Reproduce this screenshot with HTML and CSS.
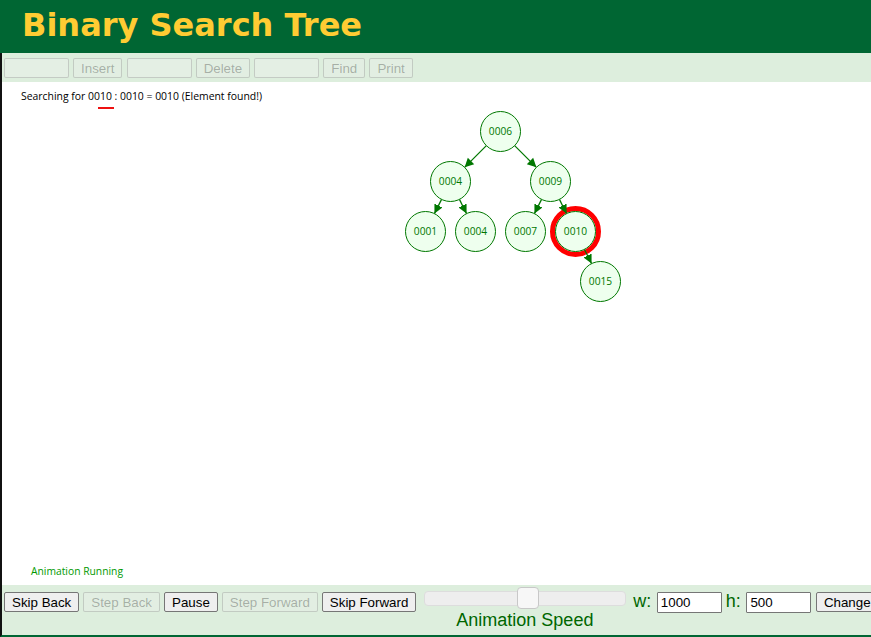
FILE: index.html
```html
<!DOCTYPE html>
<html>
<head>
<meta charset="utf-8">
<title>Binary Search Tree</title>
<link rel="stylesheet" href="styles.css">
</head>
<body>
<div class="header"><h1 class="title">Binary Search Tree</h1></div>
<div class="main">
  <div class="toolbar">
    <input class="field field-off" type="text" disabled>
    <button class="btn btn-off" disabled>Insert</button>
    <input class="field field-off" type="text" disabled>
    <button class="btn btn-off" disabled>Delete</button>
    <input class="field field-off" type="text" disabled>
    <button class="btn btn-off" disabled>Find</button>
    <button class="btn btn-off" disabled>Print</button>
  </div>
  <div class="canvas">
    <svg class="stage" width="869" height="503" viewBox="0 0 869 503" xmlns="http://www.w3.org/2000/svg">
      <defs>
        <marker id="arr" markerUnits="userSpaceOnUse" markerWidth="10" markerHeight="10" refX="9" refY="5" orient="auto">
          <path d="M0,0.5 L9,5 L0,9.5 z" fill="#007700"/>
        </marker>
      </defs>
      <g transform="translate(-2,-82)">
        <text class="msg" x="21" y="100" textLength="241" lengthAdjust="spacingAndGlyphs">Searching for 0010 : 0010 = 0010 (Element found!)</text>
        <rect x="98" y="107" width="16" height="2" fill="#ee1111"/>

        <circle cx="575.5" cy="231.5" r="23" fill="none" stroke="#ff0000" stroke-width="5"/>

        <g class="edges" stroke="#007700" stroke-width="1.2" marker-end="url(#arr)">
          <line x1="486.36" y1="145.64" x2="464.64" y2="167.36"/>
          <line x1="514.64" y1="145.64" x2="536.36" y2="167.36"/>
          <line x1="441.56" y1="199.39" x2="434.44" y2="213.61"/>
          <line x1="459.44" y1="199.39" x2="466.56" y2="213.61"/>
          <line x1="541.56" y1="199.39" x2="534.44" y2="213.61"/>
          <line x1="559.44" y1="199.39" x2="566.56" y2="213.61"/>
          <line x1="584.44" y1="249.39" x2="591.56" y2="263.61"/>
        </g>

        <g class="nodes">
          <circle cx="500.5" cy="131.5" r="20"/>
          <circle cx="450.5" cy="181.5" r="20"/>
          <circle cx="550.5" cy="181.5" r="20"/>
          <circle cx="425.5" cy="231.5" r="20"/>
          <circle cx="475.5" cy="231.5" r="20"/>
          <circle cx="525.5" cy="231.5" r="20"/>
          <circle cx="575.5" cy="231.5" r="20"/>
          <circle cx="600.5" cy="281.5" r="20"/>
        </g>
        <g class="labels">
          <text x="500.5" y="135.3">0006</text>
          <text x="450.5" y="185.3">0004</text>
          <text x="550.5" y="185.3">0009</text>
          <text x="425.5" y="235.3">0001</text>
          <text x="475.5" y="235.3">0004</text>
          <text x="525.5" y="235.3">0007</text>
          <text x="575.5" y="235.3">0010</text>
          <text x="600.5" y="285.3">0015</text>
        </g>

        <text class="status" x="31" y="575" textLength="92" lengthAdjust="spacingAndGlyphs">Animation Running</text>
      </g>
    </svg>
  </div>
  <div class="controls">
    <div class="anim-btns">
      <button class="btn">Skip Back</button>
      <button class="btn btn-off" disabled>Step Back</button>
      <button class="btn">Pause</button>
      <button class="btn btn-off" disabled>Step Forward</button>
      <button class="btn">Skip Forward</button>
    </div>
    <div class="speed">
      <div class="slider">
        <div class="track"></div>
        <div class="thumb"></div>
      </div>
      <div class="speed-label">Animation Speed</div>
    </div>
    <span class="dim-label">w:</span>
    <input class="field field-on" type="text" value="1000">
    <span class="dim-label dim-h">h:</span>
    <input class="field field-on" type="text" value="500">
    <button class="btn btn-change">Change</button>
  </div>
</div>
</body>
</html>
```
FILE: styles.css
```css
html, body {
  margin: 0;
  padding: 0;
  overflow: hidden;
  background: #ffffff;
}

body {
  width: 871px;
  height: 637px;
  font-family: "Liberation Sans", Arial, sans-serif;
}

.header {
  box-sizing: border-box;
  height: 53px;
  background: #006633;
  padding: 7px 0 0 22px;
}

.title {
  margin: 0;
  font-family: "DejaVu Sans", Verdana, sans-serif;
  font-weight: bold;
  font-size: 32px;
  line-height: 37px;
  color: #ffcc33;
  white-space: nowrap;
}

.main {
  border-left: 2px solid #111111;
  border-bottom: 2px solid #006633;
}

.toolbar {
  box-sizing: border-box;
  height: 29px;
  background: #ddeedd;
  display: flex;
  align-items: flex-start;
  gap: 4.1px;
  padding: 5px 0 0 2px;
}

.field {
  box-sizing: border-box;
  width: 65px;
  height: 20px;
  margin: 0;
  padding: 1px 3px;
  font-family: "Liberation Sans", Arial, sans-serif;
  font-size: 13.333px;
  border-radius: 2px;
  flex-shrink: 0;
}

.field-off {
  background: rgba(239, 239, 239, 0.4);
  border: 1px solid rgba(118, 118, 118, 0.3);
}

.field-on {
  height: 21px;
  background: #ffffff;
  border: 1px solid #767676;
  color: #000000;
  border-radius: 1px;
  padding: 1px 3px;
}

.btn {
  box-sizing: border-box;
  height: 20px;
  margin: 0;
  padding: 0 7px;
  font-family: "Liberation Sans", Arial, sans-serif;
  font-size: 13.333px;
  line-height: 19px;
  color: #000000;
  background: #efefef;
  border: 1px solid #767676;
  border-radius: 2px;
  white-space: nowrap;
  flex-shrink: 0;
}

.btn-off {
  color: rgba(16, 16, 16, 0.3);
  background: rgba(239, 239, 239, 0.3);
  border-color: rgba(118, 118, 118, 0.3);
}

.canvas {
  height: 503px;
  background: #ffffff;
}

.stage {
  display: block;
}

.msg {
  font-family: "Open Sans", "Noto Sans", sans-serif;
  font-size: 10px;
  fill: #000000;
}

.status {
  font-family: "Open Sans", "Noto Sans", sans-serif;
  font-size: 10px;
  fill: #009900;
}

.nodes circle {
  fill: #eeffee;
  stroke: #007700;
  stroke-width: 1;
}

.labels text {
  font-family: "Open Sans", "Noto Sans", sans-serif;
  font-size: 10.2px;
  fill: #007700;
  text-anchor: middle;
}

.controls {
  box-sizing: border-box;
  height: 50px;
  background: #ddeedd;
  display: flex;
  align-items: flex-start;
  flex-wrap: nowrap;
  overflow: hidden;
  padding-left: 2px;
}

.anim-btns {
  display: flex;
  gap: 4px;
  margin-top: 7px;
  flex-shrink: 0;
}

.speed {
  display: flex;
  flex-direction: column;
  align-items: center;
  margin: 2px 0 0 7.5px;
  flex-shrink: 0;
}

.slider {
  position: relative;
  width: 202px;
  height: 22px;
}

.track {
  box-sizing: border-box;
  margin-top: 4px;
  height: 15px;
  width: 202px;
  background: #eeeeee;
  border: 1px solid #dddddd;
  border-radius: 4px;
}

.thumb {
  position: absolute;
  box-sizing: border-box;
  left: 93.5px;
  top: 0;
  width: 22px;
  height: 22px;
  background: #f7f7f7;
  border: 1px solid #c8c8c8;
  border-radius: 4px;
}

.speed-label {
  margin-top: 1px;
  font-size: 18px;
  line-height: 20px;
  color: #006600;
  white-space: nowrap;
}

.dim-label {
  margin: 6px 5.5px 0 7.5px;
  font-size: 18px;
  line-height: 20px;
  color: #006600;
  flex-shrink: 0;
}

.dim-h {
  margin-left: 4px;
}

.controls .field-on {
  margin-top: 7px;
}

.btn-change {
  margin: 7px 0 0 4.5px;
}
```
